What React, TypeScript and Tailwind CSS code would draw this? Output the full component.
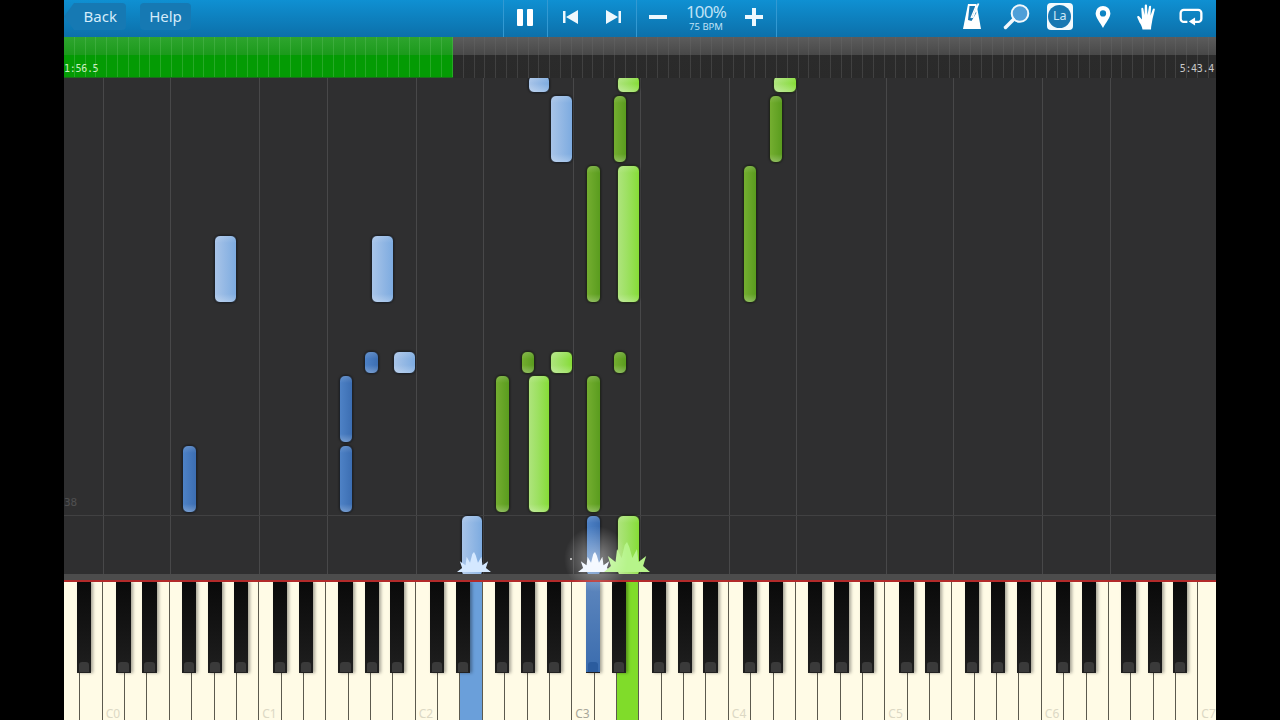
import React from "react";

type Note = [number, number, number, number, "lb" | "db" | "dg" | "lg"];

const notes: Note[] = [
  [528, 75, 22, 18, "lb"], [550, 95, 23, 68, "lb"], [214, 235, 23, 68, "lb"], [371, 235, 23, 68, "lb"],
  [393, 351, 23, 23, "lb"], [461, 515, 22, 62, "lb"],
  [364, 351, 15, 23, "db"], [339, 375, 14, 68, "db"], [339, 445, 14, 68, "db"], [182, 445, 15, 68, "db"], [586, 515, 15, 62, "db"],
  [613, 95, 14, 68, "dg"], [769, 95, 14, 68, "dg"], [586, 165, 15, 138, "dg"], [743, 165, 14, 138, "dg"],
  [521, 351, 14, 23, "dg"], [613, 351, 14, 23, "dg"], [495, 375, 15, 138, "dg"], [586, 375, 15, 138, "dg"],
  [617, 75, 23, 18, "lg"], [773, 75, 24, 18, "lg"], [617, 165, 23, 138, "lg"], [550, 351, 23, 23, "lg"],
  [528, 375, 22, 138, "lg"], [617, 515, 23, 62, "lg"],
];

const noteClass = {
  lb: "bg-gradient-to-r from-[#a8c4e8] to-[#7dabe0] border-[#1e2228]",
  db: "bg-gradient-to-r from-[#4e82c6] to-[#3c6eb2] border-[#1e2228]",
  dg: "bg-gradient-to-r from-[#74ae30] to-[#5a9c1e] border-[#20261a]",
  lg: "bg-gradient-to-r from-[#aee47c] to-[#86dc34] border-[#242e1a]",
};

const OCTAVE = 156.6;
const C0 = 38.8;

const gridXs: number[] = [];
for (let o = 0; o < 7; o++) gridXs.push(C0 + OCTAVE * o, C0 + 67.1 + OCTAVE * o);

const whiteCount = 52;
const blackOffsets = [13.5, 39.5, 78.9, 105.2, 130.7];
const blacks: number[] = [];
for (let o = -1; o < 7; o++) {
  for (const b of blackOffsets) {
    const x = C0 + OCTAVE * o + b;
    if (x > -10 && x < 1152) blacks.push(x);
  }
}
const pressedBlack = C0 + OCTAVE * 3 + 13.5;

function Spark({ left, top, width, height, color }: { left: number; top: number; width: number; height: number; color: string }) {
  return (
    <svg className="absolute blur-[0.6px]" style={{ left, top, width, height }} viewBox="0 0 60 30" preserveAspectRatio="none">
      <polygon
        fill={color}
        points="0,30 9,24 5,14 15,20 17,7 23,16 27,3 30,0 33,5 37,16 43,7 45,20 55,14 51,24 60,30"
      />
    </svg>
  );
}

function Metronome() {
  return (
    <svg width="18" height="27" viewBox="0 0 18 27">
      <path d="M5 1h8.500L18 26H0z" fill="#fff" />
      <path d="M6.500 3h5.500l1.300 7L8.500 18 5 17z" fill="#1878b2" />
      <path d="M15.500 0.500L9.500 15" stroke="#fff" strokeWidth="1.800" />
      <path d="M13 3l-5 12" stroke="#fff" strokeWidth="1.300" />
    </svg>
  );
}

function Magnifier() {
  return (
    <svg width="27" height="26" viewBox="0 0 27 26">
      <circle cx="17" cy="9.500" r="8.300" fill="#4f9fd8" stroke="#f2f8fc" strokeWidth="2" />
      <path d="M10.500 15.500L2.500 23.500" stroke="#f2f8fc" strokeWidth="3.500" strokeLinecap="round" />
    </svg>
  );
}

function Pin() {
  return (
    <svg width="18" height="24" viewBox="0 0 18 26">
      <path fillRule="evenodd" d="M9 1a8 8 0 0 1 8 8c0 5-5 10-8 16C6 19 1 14 1 9a8 8 0 0 1 8-8zm0 4.700a3.400 3.400 0 1 0 0 6.800 3.400 3.400 0 0 0 0-6.800z" fill="#fff" />
    </svg>
  );
}

function HandIcon() {
  return (
    <svg width="20" height="26" viewBox="0 0 20 26">
      <path
        d="M5.500 25.500c-.5-3-1.500-5-3-7L0.300 13.500c-.5-1.200 1-2 2-1L5 15.500 4.300 5c0-1.500 1.800-1.500 2.100-.2L7.500 11 7.800 1.500c0-1.400 2.200-1.400 2.200 0l.5 9.500 1.500-8.500c.3-1.300 2.200-1.100 2.100.3L13.500 11.500l2.300-6.300c.5-1.200 2.300-.7 2 .6L15.500 15c-.5 4-1.500 7-1.500 10.500z"
        fill="#fff"
      />
    </svg>
  );
}

function Loop() {
  return (
    <svg width="26" height="18" viewBox="0 0 26 20">
      <path d="M9 15.500H5a3.500 3.500 0 0 1-3.500-3.500V5.500A3.500 3.500 0 0 1 5 2h16a3.500 3.500 0 0 1 3.500 3.500V12a3.500 3.500 0 0 1-3.500 3.500h-5" fill="none" stroke="#fff" strokeWidth="2.600" />
      <path d="M17.500 10.500v9l-7-4.500z" fill="#fff" />
    </svg>
  );
}

export default function App() {
  return (
    <div className="w-[1280px] h-[720px] bg-black flex justify-center overflow-hidden font-['Noto_Sans','Open_Sans',sans-serif]">
      <div className="w-[1152px] h-[720px] flex flex-col relative overflow-hidden">
        {/* Toolbar */}
        <div className="h-[37px] shrink-0 flex items-start bg-gradient-to-b from-[#0f90d2] to-[#0c70aa] text-[#d4ecfa]">
          <div className="mt-[3px] w-[62px] h-[27px] flex items-center justify-end pr-[9px] text-[15px] bg-[#1679b3] rounded-r-[4px] [clip-path:polygon(0_50%,10px_0,100%_0,100%_100%,10px_100%)]">
            Back
          </div>
          <div className="mt-[3px] ml-[14px] w-[51px] h-[27px] flex items-center justify-center text-[15px] bg-[#1679b3] rounded-[4px]">
            Help
          </div>
          <div className="ml-[312px] w-[44.500px] h-full pb-[3px] flex items-center justify-center border-l border-r border-[#3399d2]">
            <div className="flex gap-[4px]">
              <div className="w-[6px] h-[17px] bg-white rounded-[1px]" />
              <div className="w-[6px] h-[17px] bg-white rounded-[1px]" />
            </div>
          </div>
          <div className="w-[89px] h-full pb-[3px] flex items-center justify-center gap-[28px] border-r border-[#3399d2]">
            <svg width="15" height="14" viewBox="0 0 15 14">
              <path d="M0 1h2.500v12H0zM15 0v14L3 7z" fill="#eef8fd" />
            </svg>
            <svg width="15" height="14" viewBox="0 0 15 14">
              <path d="M15 1h-2.500v12H15zM0 0v14l12-7z" fill="#eef8fd" />
            </svg>
          </div>
          <div className="w-[140px] h-full pb-[3px] flex items-center justify-center gap-[18px] border-r border-[#3399d2]">
            <div className="w-[18px] h-[4px] bg-[#eef8fd]" />
            <div className="w-[42px] flex flex-col items-center text-[#bfe2f6]">
              <span className="text-[17px] leading-[18px] tracking-[-0.8px]">100%</span>
              <span className="text-[9.500px] leading-[11px]">75 BPM</span>
            </div>
            <div className="w-[18px] h-[18px] relative">
              <div className="absolute left-0 top-[7px] w-[18px] h-[4px] bg-[#eef8fd]" />
              <div className="absolute left-[7px] top-0 w-[4px] h-[18px] bg-[#eef8fd]" />
            </div>
          </div>
          <div className="ml-[174px] flex h-full items-center pb-[4px]">
            <div className="w-[43.700px] flex justify-center"><Metronome /></div>
            <div className="w-[43.700px] flex justify-center"><Magnifier /></div>
            <div className="w-[43.700px] flex justify-center">
              <div className="w-[26px] h-[27px] rounded-[4px] bg-[#f4fafd] flex items-center justify-center">
                <div className="w-[23px] h-[23px] rounded-full bg-[#1878b2] flex items-center justify-center text-[12.500px] text-[#cfe8f7]">
                  La
                </div>
              </div>
            </div>
            <div className="w-[43.700px] flex justify-center"><Pin /></div>
            <div className="w-[43.700px] flex justify-center"><HandIcon /></div>
            <div className="w-[43.700px] flex justify-center"><Loop /></div>
          </div>
        </div>

        {/* Progress */}
        <div className="h-[41px] shrink-0 flex relative overflow-hidden">
          <div className="w-[389px] h-full bg-[linear-gradient(to_bottom,#2ea52e_0%,#1c9a1c_44%,#049b04_45%,#049b04_100%)] flex border-b border-[#1c6c1c]">
            {Array.from({ length: 36 }).map((_, i) => (
              <div key={i} className="w-[10.800px] shrink-0 h-full border-r border-[#5cbd5c]/40" />
            ))}
          </div>
          <div className="flex-1 h-full bg-[linear-gradient(to_bottom,#5c5c5c_0%,#484848_44%,#2b2b2b_45%,#2a2a2a_100%)] flex overflow-hidden">
            {Array.from({ length: 72 }).map((_, i) => (
              <div key={i} className="w-[10.800px] shrink-0 h-full border-r border-[#6a6a6a]/35" />
            ))}
          </div>
          <span className="absolute left-0 top-[25px] text-[10px] leading-[13px] text-[#c8eec0] font-['DejaVu_Sans_Mono',monospace] tracking-[-0.300px]">1:56.5</span>
          <span className="absolute right-[2px] top-[25px] text-[10px] leading-[13px] text-[#c8c8c8] font-['DejaVu_Sans_Mono',monospace] tracking-[-0.300px]">5:43.4</span>
        </div>

        {/* Note field */}
        <div className="h-[496px] shrink-0 bg-[#2f2f30] relative overflow-hidden">
          {gridXs.map((x) => (
            <div key={x} className="absolute top-0 bottom-0 w-px bg-[#484849]" style={{ left: x }} />
          ))}
          <div className="absolute left-0 right-0 top-[437px] h-px bg-[#414142]" />
          <span className="absolute left-0 top-[418px] text-[11px] leading-[14px] text-[#4f4f50] font-['DejaVu_Sans_Mono',monospace]">38</span>
          {notes.map(([x, y, w, h, c], i) => (
            <div
              key={i}
              className={`absolute rounded-[6px] border shadow-[0_0_2px_rgba(0,0,0,0.6)] ${noteClass[c]}`}
              style={{ left: x - 64, top: y - 78, width: w, height: h }}
            >
              <div className="absolute inset-x-0 top-0 h-[7px] rounded-t-[5px] bg-gradient-to-b from-white/15 to-transparent" />
              <div className="absolute inset-x-0 bottom-0 h-[8px] rounded-b-[5px] bg-gradient-to-b from-transparent to-white/25" />
            </div>
          ))}
          <div className="absolute left-[506px] top-[480px] w-[2px] h-[2px] bg-white/80 rounded-full" />
        </div>

        {/* Glow and sparks over the note field */}
        <Spark left={393} top={552} width={34} height={20} color="#d4e8ff" />
        <Spark left={514} top={552} width={34} height={20} color="#eef5ff" />
        <Spark left={540} top={542} width={46} height={30} color="#b6f48a" />

        {/* Rail */}
        <div className="h-[6px] shrink-0 bg-[#4c4c4c]" />
        <div className="h-[2px] shrink-0 bg-[#b22a2a]" />

        {/* Keyboard */}
        <div className="flex-1 relative overflow-hidden">
          <div className="flex h-full -ml-[6px]">
            {Array.from({ length: whiteCount }).map((_, i) => {
              const pressedE2 = i === 18;
              const pressedE3 = i === 25;
              const oct = (i - 2) / 7;
              const isC = i >= 2 && (i - 2) % 7 === 0;
              return (
                <div
                  key={i}
                  className={`w-[22.370px] h-full shrink-0 border-r-[1.500px] border-[#5c5a4e] relative ${
                    pressedE2 ? "bg-[#6a9fda]" : pressedE3 ? "bg-[#80dc2a]" : "bg-[#fffbe6]"
                  }`}
                >
                  {isC && (
                    <span
                      className={`absolute left-[3px] bottom-0 text-[12px] leading-[13px] ${
                        oct === 3 ? "text-[#a8a698]" : "text-[#dcd8c4]"
                      }`}
                    >
                      C{oct}
                    </span>
                  )}
                </div>
              );
            })}
          </div>
          {blacks.map((x, i) => {
            const pressed = Math.abs(x - pressedBlack) < 1;
            return (
              <div
                key={i}
                className={`absolute top-0 h-[91px] w-[14.300px] border-b border-[#222] shadow-[2px_0_3px_rgba(0,0,0,0.35)] ${
                  pressed
                    ? "bg-gradient-to-b from-[#5d86bd] to-[#3a6cae]"
                    : "bg-gradient-to-b from-[#0a0a0a] via-[#141414] to-[#1f1f1f]"
                }`}
                style={{ left: x }}
              >
                <div className={`absolute left-[2px] right-[2px] bottom-0 h-[10px] rounded-t-[3px] ${pressed ? "bg-[#2b5c9e]" : "bg-[#3a3a3a]"}`} />
              </div>
            );
          })}
        </div>

        {/* Glow that spills across the rail and keys */}
        <div className="absolute left-[500px] top-[526px] w-[64px] h-[66px] rounded-full bg-[radial-gradient(closest-side,rgba(255,255,255,0.45),transparent)]" />
      </div>
    </div>
  );
}
